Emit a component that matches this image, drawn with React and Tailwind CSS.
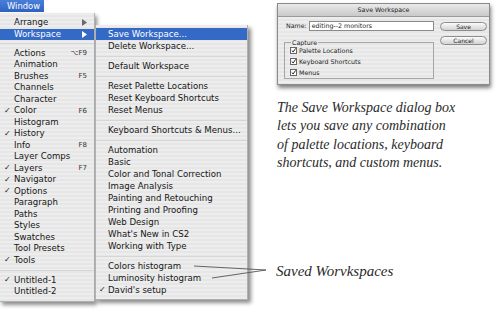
import React from "react";

const mainItems = [
  { label: "Arrange", arrow: true },
  { label: "Workspace", arrow: true, active: true },
  { sep: true, h: "h-[7.5px]" },
  { label: "Actions", key: "⌥F9" },
  { label: "Animation" },
  { label: "Brushes", key: "F5" },
  { label: "Channels" },
  { label: "Character" },
  { label: "Color", key: "F6", check: true },
  { label: "Histogram" },
  { label: "History", check: true },
  { label: "Info", key: "F8" },
  { label: "Layer Comps" },
  { label: "Layers", key: "F7", check: true },
  { label: "Navigator", check: true },
  { label: "Options", check: true },
  { label: "Paragraph" },
  { label: "Paths" },
  { label: "Styles" },
  { label: "Swatches" },
  { label: "Tool Presets" },
  { label: "Tools", check: true },
  { sep: true, h: "h-[8.5px]" },
  { label: "Untitled-1", check: true },
  { label: "Untitled-2" },
];

const subItems = [
  { label: "Save Workspace...", active: true },
  { label: "Delete Workspace..." },
  { sep: true },
  { label: "Default Workspace" },
  { sep: true },
  { label: "Reset Palette Locations" },
  { label: "Reset Keyboard Shortcuts" },
  { label: "Reset Menus" },
  { sep: true },
  { label: "Keyboard Shortcuts & Menus..." },
  { sep: true },
  { label: "Automation" },
  { label: "Basic" },
  { label: "Color and Tonal Correction" },
  { label: "Image Analysis" },
  { label: "Painting and Retouching" },
  { label: "Printing and Proofing" },
  { label: "Web Design" },
  { label: "What's New in CS2" },
  { label: "Working with Type" },
  { sep: true },
  { label: "Colors histogram" },
  { label: "Luminosity histogram" },
  { label: "David's setup", check: true },
];

const stripes =
  "bg-[repeating-linear-gradient(to_bottom,#ededed_0px,#ededed_2px,#e6e6e6_2px,#e6e6e6_4px)]";

const Arrow = ({ white }) => (
  <svg width="5" height="7" viewBox="0 0 5 7">
    <path d="M0 0 L5 3.5 L0 7 Z" fill={white ? "#ffffff" : "#6a6a6a"} />
  </svg>
);

const Separator = ({ h }) => (
  <div className={`${h} flex flex-col justify-center`}>
    <div className="h-px bg-[#d6d6d6]" />
  </div>
);

const MainMenu = () => (
  <div className={`mt-px pt-[4px] pb-[3px] ${stripes} border-r border-b border-[#b0b0b0] shadow-[2px_3px_4px_rgba(0,0,0,0.45)]`}>
    {mainItems.map((it, i) =>
      it.sep ? (
        <Separator key={i} h={it.h} />
      ) : (
        <div
          key={i}
          className={`h-[11.5px] flex items-center pr-[7px] ${
            it.active ? "bg-[#3569c6] text-white" : "text-[#161616]"
          }`}
        >
          <span className="w-[14px] pl-[4px] text-[8px]">{it.check ? "✓" : ""}</span>
          <span className="flex-1">{it.label}</span>
          {it.key && <span className="text-[7px] text-[#333]">{it.key}</span>}
          {it.arrow && <Arrow white={it.active} />}
        </div>
      )
    )}
  </div>
);

const SubMenu = () => (
  <div className={`w-[153px] mt-[25px] self-start pt-[3px] pb-[3px] ${stripes} border-l border-r border-b border-[#b0b0b0] shadow-[3px_3px_4px_rgba(0,0,0,0.45)]`}>
    {subItems.map((it, i) =>
      it.sep ? (
        <Separator key={i} h="h-[8px]" />
      ) : (
        <div
          key={i}
          className={`h-[12px] flex items-center ${
            it.active ? "bg-[#3569c6] text-white" : "text-[#161616]"
          }`}
        >
          <span className="w-[12px] pl-[3px] text-[8px]">{it.check ? "✓" : ""}</span>
          <span>{it.label}</span>
        </div>
      )
    )}
  </div>
);

const Check = () => (
  <span className="w-[7px] h-[7px] border border-[#666] bg-white flex items-center justify-center">
    <svg width="7" height="7" viewBox="0 0 7 7">
      <path d="M1 3.5 L3 5.5 L6.5 0.5" stroke="#111" strokeWidth="1.3" fill="none" />
    </svg>
  </span>
);

const AquaButton = ({ children }) => (
  <div className="h-[9px] w-[47px] rounded-full border border-[#8c8c8c] bg-gradient-to-b from-[#fbfbfb] to-[#d2d2d2] flex items-center justify-center text-[6px] text-[#222]">
    {children}
  </div>
);

const SaveDialog = () => (
  <div className="w-[213px] h-[82px] border border-[#8a8a8a] shadow-[1px_3px_4px_rgba(0,0,0,0.5)] flex flex-col not-italic font-['DejaVu_Sans',sans-serif] text-[6.3px] leading-normal text-[#222]">
    <div className="h-[13px] bg-gradient-to-b from-[#eaeaea] to-[#c9c9c9] border-b border-[#9a9a9a] flex items-center justify-center">
      Save Workspace
    </div>
    <div className={`flex-1 flex pl-[6px] pt-[4px] ${stripes}`}>
      <div className="w-[150px] flex flex-col">
        <div className="flex items-center gap-[2px] pl-[2px] h-[10px]">
          <span className="shrink-0">Name:</span>
          <div className="flex-1 h-[10px] border border-[#8a8a8a] bg-white flex items-center pl-[2px]">
            editing--2 monitors
          </div>
        </div>
        <fieldset className="mt-[8px] h-[40px] border border-[#a6a6a6] pl-[5px]">
          <legend className="px-px ml-[1px] leading-[7px]">Capture</legend>
          <div className="flex flex-col gap-[4px] pt-[1px]">
            {["Palette Locations", "Keyboard Shortcuts", "Menus"].map((t) => (
              <div key={t} className="flex items-center gap-[2px] h-[7px]">
                <Check />
                <span>{t}</span>
              </div>
            ))}
          </div>
        </fieldset>
      </div>
      <div className="ml-[6px] flex flex-col gap-[5px] pt-px">
        <AquaButton>Save</AquaButton>
        <AquaButton>Cancel</AquaButton>
      </div>
    </div>
  </div>
);

export default function App() {
  return (
    <div className="relative w-[500px] h-[323px] bg-white overflow-hidden flex font-['DejaVu_Sans',sans-serif] text-[8.6px]">
      <div className="w-[95px] flex flex-col">
        <div className="h-[12px] w-[44px] bg-gradient-to-b from-[#4a7fd8] to-[#2d62c2] text-white text-[8.4px] flex items-center pl-[7px]">
          Window
        </div>
        <MainMenu />
      </div>
      <SubMenu />
      <div className="ml-[29px] mt-[3px] flex flex-col font-['Liberation_Serif',serif] italic text-[#2a2a2a]">
        <SaveDialog />
        <p className="mt-[14px] text-[14px] leading-[18.3px]">
          The Save Workspace dialog box
          <br />
          lets you save any combination
          <br />
          of palette locations, keyboard
          <br />
          shortcuts, and custom menus.
        </p>
        <p className="mt-[90px] -ml-px text-[15px] leading-[18px]">Saved Worvkspaces</p>
      </div>
      <svg className="absolute inset-0 pointer-events-none" width="500" height="323">
        <path d="M194 266 L266 270 M212 278 L266 270" stroke="#555" strokeWidth="0.9" fill="none" />
      </svg>
    </div>
  );
}
